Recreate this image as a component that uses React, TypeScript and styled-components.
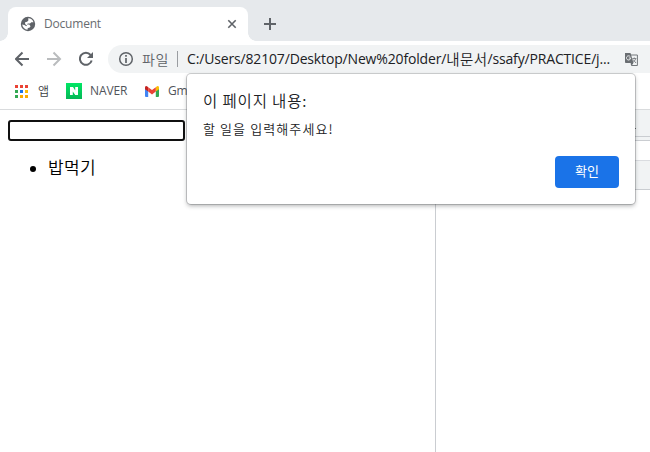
import React from "react";
import styled, { createGlobalStyle } from "styled-components";

const Global = createGlobalStyle`
  * { box-sizing: border-box; }
  html, body { margin: 0; background: #fff; overflow: hidden; }
  body { font-family: "Open Sans", "Noto Sans CJK KR", sans-serif; }
  svg { flex: none; }
`;

const Window = styled.div`
  position: relative;
  display: flex;
  flex-direction: column;
  width: 650px;
  height: 452px;
  overflow: hidden;
  background: #fff;
`;

const Label = styled.span<{ $size: number; $color: string; $spacing?: number; $light?: boolean }>`
  font-size: ${(p) => p.$size}px;
  font-weight: ${(p) => (p.$light ? 350 : 400)};
  color: ${(p) => p.$color};
  letter-spacing: ${(p) => p.$spacing ?? 0}px;
  line-height: 20px;
  white-space: pre;
`;

const KoreanLabel = styled(Label)`
  font-family: "Noto Sans CJK KR", sans-serif;
`;

const TabStrip = styled.header`
  display: flex;
  flex: none;
  height: 41px;
  padding: 7px 0 0 8px;
  background: #e6e9ec;
`;

const Tab = styled.div`
  position: relative;
  display: flex;
  align-items: center;
  width: 240px;
  height: 34px;
  padding: 0 11px 0 12px;
  border-radius: 8px 8px 0 0;
  background: #fff;
  &::before, &::after {
    content: "";
    position: absolute;
    bottom: 0;
    width: 8px;
    height: 8px;
  }
  &::before { left: -8px; background: radial-gradient(circle at 0 0, transparent 7.5px, #fff 8px); }
  &::after { right: -8px; background: radial-gradient(circle at 100% 0, transparent 7.5px, #fff 8px); }
`;

const TabTitle = styled.div`
  flex: 1;
  display: flex;
  margin-left: 8px;
`;

const NewTab = styled.div`
  display: flex;
  align-items: center;
  margin-left: 15px;
  height: 34px;
`;

const Toolbar = styled.nav`
  display: flex;
  flex: none;
  align-items: center;
  height: 36px;
  padding-left: 15px;
  gap: 16px;
`;

const AddressBar = styled.div`
  display: flex;
  flex: none;
  align-items: center;
  width: 560px;
  height: 28px;
  margin-left: -3px;
  padding-left: 10px;
  border-radius: 14px;
  background: #f1f3f4;
`;

const Scheme = styled.div`
  display: flex;
  width: 36px;
  margin-left: 8px;
  border-right: 1px solid #9a9da1;
  height: 16px;
  align-items: center;
  overflow: visible;
`;

const Url = styled.div`
  display: flex;
  align-items: center;
  flex: none;
  width: 437px;
  margin-left: 9px;
`;

const Bookmarks = styled.div`
  display: flex;
  flex: none;
  align-items: center;
  height: 33px;
  padding: 0 0 4px 15px;
  border-bottom: 1px solid #d9dbdd;
`;

const Bookmark = styled.div<{ $gap: number; $width: number }>`
  display: flex;
  flex: none;
  align-items: center;
  gap: ${(p) => p.$gap}px;
  width: ${(p) => p.$width}px;
`;

const Content = styled.main`
  display: flex;
  flex: 1;
`;

const Page = styled.section`
  width: 435px;
  padding: 10px 8px;
`;

const TodoInput = styled.input`
  display: block;
  width: 177px;
  height: 21px;
  border: 2px solid #101010;
  border-radius: 3px;
  outline: none;
  background: #fff;
`;

const TodoList = styled.ul`
  list-style: none;
  margin: 15px 0 0;
  padding: 0 0 0 22px;
`;

const TodoItem = styled.li`
  display: flex;
  align-items: center;
  height: 21px;
  &::before {
    content: "";
    width: 6px;
    height: 6px;
    margin: 5px 12px 0 0;
    border-radius: 50%;
    background: #000;
  }
`;

const DevTools = styled.aside`
  flex: 1;
  border-left: 1px solid #cacdd1;
`;

const DevBar = styled.div<{ $height: number; $top?: boolean }>`
  height: ${(p) => p.$height}px;
  background: #f1f3f4;
  border-bottom: 1px solid #cacdd1;
  border-top: ${(p) => (p.$top ? "1px solid #dadce0" : "none")};
`;

const DevTabs = styled(DevBar)`
  display: flex;
  align-items: center;
  padding: 10px 0 0 198px;
`;

const DevMark = styled.i`
  width: 2px;
  height: 1px;
  background: #5f6368;
`;

const DevGap = styled.div`
  height: 19px;
`;

const Dialog = styled.div`
  position: absolute;
  left: 187px;
  top: 74px;
  display: flex;
  flex-direction: column;
  width: 448px;
  height: 130px;
  padding: 16px 16px 16px;
  border-radius: 4px;
  background: #fff;
  box-shadow: 0 0 0 1px rgba(60, 64, 67, 0.24), 0 2px 4px 0 rgba(60, 64, 67, 0.38);
`;

const Message = styled.div`
  display: flex;
  margin-top: 9px;
`;

const Confirm = styled.button`
  display: flex;
  align-items: center;
  justify-content: center;
  align-self: flex-end;
  flex: none;
  width: 64px;
  height: 32px;
  margin-top: auto;
  padding: 0 0 2px;
  border: 0;
  border-radius: 4px;
  background: #1a73e8;
  font-family: inherit;
`;

const GREY = "#5f6368";

const Globe = () => (
  <svg width="16" height="16" viewBox="0 0 16 16">
    <circle cx="8" cy="8" r="7.2" fill={GREY} />
    <path d="M8.2 2.3C10.6 2.2 12.8 3.9 13.5 6.2H11.3L10 7.5H7.8L6.9 8.6H9.2L10.6 10.2 9.4 11.8 7.8 12.1 7.5 13.7C4.7 13.5 2.5 11.4 2.2 8.5L5 9.2 6 10.2 7.1 9.8 5.1 7.9V6.3L7.1 5.8 8.4 4.6Z" fill="#fff" />
  </svg>
);

const Close = () => (
  <svg width="10" height="10" viewBox="0 0 10 10">
    <path d="m1.3 1.3 7.4 7.4M8.7 1.3 1.3 8.7" stroke={GREY} strokeWidth="1.6" />
  </svg>
);

const Plus = () => (
  <svg width="14" height="14" viewBox="0 0 14 14">
    <path d="M7 1v12M1 7h12" stroke={GREY} strokeWidth="2" />
  </svg>
);

const Arrow = ({ forward = false }: { forward?: boolean }) => (
  <svg width="16" height="16" viewBox="0 0 16 16">
    <path
      d={forward ? "M0 8h12.5M6.5 1.5 13 8 6.5 14.5" : "M14 8H1.5M7.5 1.5 1 8 7.5 14.5"}
      fill="none" stroke={forward ? "#babcbe" : GREY} strokeWidth="2"
    />
  </svg>
);

const Reload = () => (
  <svg width="16" height="16" viewBox="1 0 16 16">
    <path d="M13.7 9.5A6 6 0 1 1 12.6 4" fill="none" stroke={GREY} strokeWidth="2" />
    <path d="M15 1v6H9Z" fill={GREY} />
  </svg>
);

const Info = () => (
  <svg width="16" height="16" viewBox="0 0 16 16">
    <circle cx="8" cy="8" r="6.3" fill="none" stroke={GREY} strokeWidth="1.5" />
    <path d="M8 4v1.7M8 7v5" stroke={GREY} strokeWidth="1.7" />
  </svg>
);

const Translate = () => (
  <svg width="15" height="15" viewBox="0 0 15 15">
    <path d="M6 3h7.4v10.5H7.5Z" fill="#f1f3f4" stroke="#73777b" />
    <path d="M1 1h5.5l3 10H1.8Q1 11 1 10Z" fill="#6a6e72" />
    <path d="M6.3 4.7A2.1 2.1 0 1 0 6.7 6H4.8" fill="none" stroke="#f1f3f4" />
    <path d="M8.3 6.5h4M10.3 5.5v1M11.7 6.7Q11 9 9.2 10M9 7.5l3 3.5" fill="none" stroke="#777b7f" strokeWidth=".9" />
    <path d="m7 11 2.3.1-1.5 2.3Z" fill={GREY} />
  </svg>
);

const appColors = ["#ea4335", "#ea4335", "#ea4335", "#34a853", "#1a73e8", "#fbbc04", "#34a853", "#fbab00", "#fbab00"];
const Apps = () => (
  <svg width="13" height="13" viewBox="0 0 13 13" shapeRendering="crispEdges">
    {appColors.map((c, i) => (
      <rect key={i} x={(i % 3) * 5} y={Math.floor(i / 3) * 5} width="3" height="3" fill={c} />
    ))}
  </svg>
);

const NaverLogo = () => (
  <svg width="16" height="16" viewBox="0 0 16 16">
    <defs>
      <linearGradient id="naver" x2="0" y2="1">
        <stop stopColor="#00e765" />
        <stop offset="1" stopColor="#05b756" />
      </linearGradient>
    </defs>
    <path d="M0 0h16v16H0Z" fill="url(#naver)" />
    <path d="M4 4h3l2.2 3.6V4H12v8H9.2L6.8 8.4V12H4Z" fill="#fff" />
  </svg>
);

const GmailLogo = () => (
  <svg width="14" height="11" viewBox="0 0 14 11">
    <path d="M0 2.2 3.2 4.6V11H1Q0 11 0 10Z" fill="#4285f4" />
    <path d="M14 2.2 10.8 4.6V11H13q1 0 1-1Z" fill="#34a853" />
    <path d="M10.8 1.2 12 .3Q14-.5 14 1.6v1.6l-3.2 2.4Z" fill="#fbbc04" />
    <path d="M3.2 1.2 2 .3Q0-.5 0 1.6v1.6l3.2 2.4Z" fill="#c5221f" />
    <path d="M3.2 1.2 7 4.1l3.8-2.9v4.4L7 8.5 3.2 5.6Z" fill="#ea4335" />
  </svg>
);

export default function App() {
  return (
    <Window>
      <Global />
      <TabStrip>
        <Tab>
          <Globe />
          <TabTitle><Label $size={12} $color="#686c70" $spacing={-0.2}>Document</Label></TabTitle>
          <Close />
        </Tab>
        <NewTab><Plus /></NewTab>
      </TabStrip>
      <Toolbar>
        <Arrow />
        <Arrow forward />
        <Reload />
        <AddressBar>
          <Info />
          <Scheme><KoreanLabel $size={14} $color={GREY} $spacing={0.6} $light>파일</KoreanLabel></Scheme>
          <Url>
            <Label $size={14} $color="#202124" $spacing={-0.16}>C:/Users/82107/Desktop/New%20folder/</Label>
            <KoreanLabel $size={14.5} $color="#202124" $spacing={0.4} $light>내문서</KoreanLabel>
            <Label $size={14} $color="#202124" $spacing={-0.16}>/ssafy/PRACTICE/j...</Label>
          </Url>
          <Translate />
        </AddressBar>
      </Toolbar>
      <Bookmarks>
        <Bookmark $gap={10} $width={51}><Apps /><KoreanLabel $size={12} $color="#3c4043" $light>앱</KoreanLabel></Bookmark>
        <Bookmark $gap={8} $width={79}><NaverLogo /><Label $size={12} $color="#50545a" $spacing={-0.1}>NAVER</Label></Bookmark>
        <Bookmark $gap={9} $width={60}><GmailLogo /><Label $size={12} $color="#50545a" $spacing={-0.2}>Gmail</Label></Bookmark>
      </Bookmarks>
      <Content>
        <Page>
          <TodoInput />
          <TodoList>
            <TodoItem><KoreanLabel $size={17} $color="#000" $spacing={0.4} $light>밥먹기</KoreanLabel></TodoItem>
          </TodoList>
        </Page>
        <DevTools>
          <DevTabs $height={27}><DevMark /></DevTabs>
          <DevBar $height={4} />
          <DevGap />
          <DevBar $height={30} $top />
        </DevTools>
      </Content>
      <Dialog>
        <KoreanLabel $size={15.5} $color="#202124" $spacing={0.85} $light>이 페이지 내용:</KoreanLabel>
        <Message><KoreanLabel $size={13} $color="#202124" $spacing={1.1} $light>할 일을 입력해주세요!</KoreanLabel></Message>
        <Confirm><KoreanLabel $size={13} $color="#fff">확인</KoreanLabel></Confirm>
      </Dialog>
    </Window>
  );
}
